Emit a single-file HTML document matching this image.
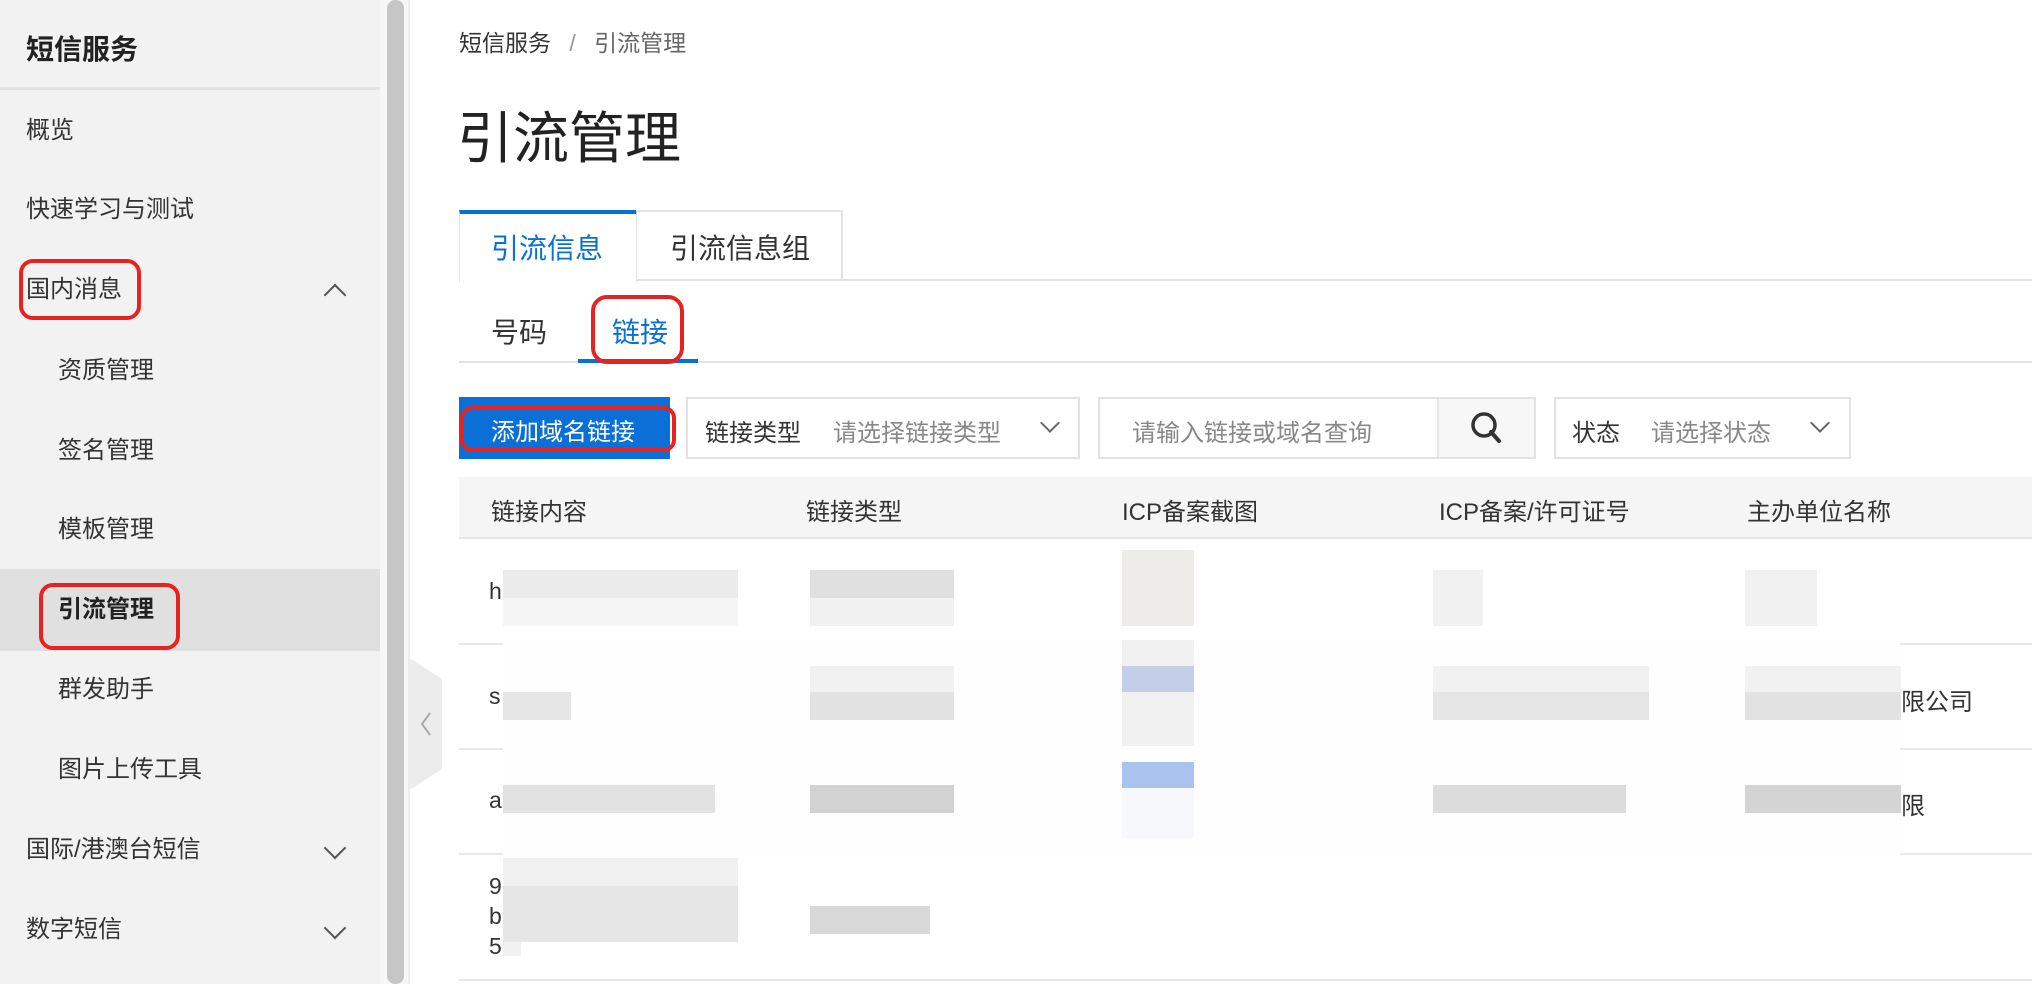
<!DOCTYPE html>
<html><head><meta charset="utf-8"><style>
*{margin:0;padding:0;box-sizing:border-box}
body{width:2032px;height:984px;overflow:hidden;background:#fff;font-family:"Liberation Sans","Noto Sans CJK SC",sans-serif;color:#333;position:relative}
.a{position:absolute;white-space:nowrap}
.side{position:absolute;left:0;top:0;width:380px;height:984px;background:#f2f2f2}
.it{position:absolute;font-size:24px;color:#333;line-height:30px}
.red{position:absolute;border:4px solid #e8231f;border-radius:14px}
.chev{position:absolute;width:16px;height:16px;border-left:2.5px solid #555;border-top:2.5px solid #555}
.g{position:absolute;background:#e4e4e4}
.l{position:absolute;background:#f1f1f1}
.th{position:absolute;top:492px;font-size:24px;color:#333}
.cell{position:absolute;font-size:23px;color:#333}
</style></head><body>
<div class="side"></div>
<div class="a" style="left:26px;top:28px;font-size:28px;font-weight:bold;color:#222">短信服务</div>
<div class="a" style="left:0;top:87px;width:380px;height:3px;background:#e2e2e2"></div>
<div class="it" style="left:26px;top:116px">概览</div>
<div class="it" style="left:26px;top:195px">快速学习与测试</div>
<div class="it" style="left:26px;top:275px">国内消息</div>
<div class="chev" style="left:327px;top:287px;transform:rotate(45deg)"></div>
<div class="it" style="left:58px;top:356px">资质管理</div>
<div class="it" style="left:58px;top:436px">签名管理</div>
<div class="it" style="left:58px;top:515px">模板管理</div>
<div class="a" style="left:0;top:569px;width:380px;height:82px;background:#e0e0e0"></div>
<div class="it" style="left:58px;top:595px;font-weight:bold;color:#222">引流管理</div>
<div class="it" style="left:58px;top:675px">群发助手</div>
<div class="it" style="left:58px;top:755px">图片上传工具</div>
<div class="it" style="left:26px;top:835px">国际/港澳台短信</div>
<div class="chev" style="left:327px;top:840px;transform:rotate(225deg)"></div>
<div class="it" style="left:26px;top:915px">数字短信</div>
<div class="chev" style="left:327px;top:920px;transform:rotate(225deg)"></div>
<div class="red" style="left:19px;top:259px;width:122px;height:61px"></div>
<div class="red" style="left:39px;top:583px;width:141px;height:67px"></div>
<!-- scrollbar -->
<div class="a" style="left:380px;top:0;width:28px;height:984px;background:#f7f7f7"></div>
<div class="a" style="left:387px;top:0;width:17px;height:984px;background:#c6c6c6;border-radius:8px"></div>
<div class="a" style="left:408px;top:0;width:2px;height:984px;background:#ededed"></div>
<!-- collapse handle -->
<svg class="a" style="left:408px;top:657px" width="36" height="134"><path d="M0 0 L34 22 L34 112 L0 134Z" fill="#ececec"/><path d="M22 56 L14 67 L22 78" stroke="#aaa" stroke-width="2" fill="none"/></svg>
<!-- main -->
<div class="a" style="left:459px;top:24px;font-size:23px;color:#333">短信服务 <span style="color:#999;margin:0 12px">/</span> <span style="color:#666">引流管理</span></div>
<div class="a" style="left:457px;top:94px;font-size:56px;color:#222">引流管理</div>
<!-- tabs -->
<div class="a" style="left:459px;top:210px;width:178px;height:72px;background:#fff;border-top:4px solid #0a6fd6;border-left:1px solid #e4e4e4;border-right:1px solid #e4e4e4"></div>
<div class="a" style="left:491px;top:227px;font-size:28px;color:#0a6fd6">引流信息</div>
<div class="a" style="left:636px;top:210px;width:207px;height:71px;border:2px solid #e2e2e2;border-left:none"></div>
<div class="a" style="left:670px;top:227px;font-size:28px;color:#333">引流信息组</div>
<div class="a" style="left:843px;top:279px;width:1189px;height:2px;background:#e2e2e2"></div>
<!-- subtabs -->
<div class="a" style="left:491px;top:311px;font-size:28px;color:#333">号码</div>
<div class="a" style="left:612px;top:311px;font-size:28px;color:#0a6fd6">链接</div>
<div class="a" style="left:459px;top:361px;width:1573px;height:2px;background:#e2e2e2"></div>
<div class="a" style="left:578px;top:359px;width:120px;height:4px;background:#0a6fd6"></div>
<div class="red" style="left:591px;top:295px;width:93px;height:69px;border-radius:16px"></div>
<!-- toolbar -->
<div class="a" style="left:459px;top:397px;width:211px;height:62px;background:#0a6fd6"></div>
<div class="a" style="left:491px;top:412px;font-size:24px;color:#fff">添加域名链接</div>
<div class="red" style="left:460px;top:406px;width:216px;height:46px;border-radius:12px"></div>
<div class="a" style="left:686px;top:397px;width:394px;height:62px;border:2px solid #e2e2e2"></div>
<div class="a" style="left:705px;top:413px;font-size:24px;color:#333">链接类型</div>
<div class="a" style="left:833px;top:413px;font-size:24px;color:#888">请选择链接类型</div>
<div class="chev" style="left:1043px;top:416px;width:14px;height:14px;transform:rotate(225deg);border-color:#666;border-width:2px"></div>
<div class="a" style="left:1098px;top:397px;width:438px;height:62px;border:2px solid #e2e2e2"></div>
<div class="a" style="left:1437px;top:399px;width:97px;height:58px;background:#f7f7f7;border-left:2px solid #e6e6e6"></div>
<div class="a" style="left:1132px;top:413px;font-size:24px;color:#888">请输入链接或域名查询</div>
<svg class="a" style="left:1470px;top:411px" width="34" height="34"><circle cx="14" cy="14" r="11" stroke="#333" stroke-width="3.5" fill="none"/><path d="M21 21 L29 30" stroke="#333" stroke-width="4" stroke-linecap="round"/></svg>
<div class="a" style="left:1554px;top:397px;width:297px;height:62px;border:2px solid #e2e2e2"></div>
<div class="a" style="left:1572px;top:413px;font-size:24px;color:#333">状态</div>
<div class="a" style="left:1651px;top:413px;font-size:24px;color:#888">请选择状态</div>
<div class="chev" style="left:1813px;top:416px;width:14px;height:14px;transform:rotate(225deg);border-color:#666;border-width:2px"></div>
<!-- table -->
<div class="a" style="left:459px;top:477px;width:1573px;height:62px;background:#f5f5f5;border-bottom:2px solid #e6e6e6"></div>
<div class="th" style="left:491px">链接内容</div>
<div class="th" style="left:806px">链接类型</div>
<div class="th" style="left:1122px">ICP备案截图</div>
<div class="th" style="left:1439px">ICP备案/许可证号</div>
<div class="th" style="left:1747px">主办单位名称</div>
<div class="a" style="left:459px;top:643px;width:1573px;height:2px;background:#e8e8e8"></div>
<div class="a" style="left:459px;top:748px;width:1573px;height:2px;background:#e8e8e8"></div>
<div class="a" style="left:459px;top:853px;width:1573px;height:2px;background:#e8e8e8"></div>
<div class="a" style="left:459px;top:979px;width:1573px;height:2px;background:#e8e8e8"></div>
<div class="a" style="left:503px;top:643px;width:1397px;height:212px;background:#fefefe"></div>
<div class="cell" style="left:489px;top:578px">h</div>
<div class="cell" style="left:489px;top:683px">s</div>
<div class="cell" style="left:489px;top:787px">a</div>
<div class="cell" style="left:489px;top:871px;line-height:30px">9<br>b<br>5.</div>
<div class="cell" style="left:1901px;top:682px;font-size:24px">限公司</div>
<div class="cell" style="left:1901px;top:786px;font-size:24px">限</div>
<!-- blurred blocks -->
<div class="g" style="left:503px;top:570px;width:235px;height:28px;background:#ebebeb"></div>
<div class="l" style="left:503px;top:598px;width:235px;height:28px;background:#f5f5f5"></div>
<div class="g" style="left:810px;top:570px;width:144px;height:28px;background:#e0e0e0"></div>
<div class="l" style="left:810px;top:598px;width:144px;height:28px"></div>
<div class="l" style="left:1122px;top:550px;width:72px;height:76px;background:#eeece8"></div>
<div class="l" style="left:1433px;top:570px;width:50px;height:56px"></div>
<div class="l" style="left:1745px;top:570px;width:72px;height:56px"></div>
<div class="g" style="left:503px;top:692px;width:68px;height:28px;background:#e6e6e6"></div>
<div class="l" style="left:810px;top:666px;width:144px;height:28px"></div>
<div class="g" style="left:810px;top:692px;width:144px;height:28px;background:#e2e2e2"></div>
<div class="l" style="left:1122px;top:640px;width:72px;height:26px"></div>
<div class="a" style="left:1122px;top:666px;width:72px;height:26px;background:#c3cfe9"></div>
<div class="l" style="left:1122px;top:692px;width:72px;height:54px"></div>
<div class="l" style="left:1433px;top:666px;width:216px;height:28px"></div>
<div class="g" style="left:1433px;top:692px;width:216px;height:28px;background:#e6e6e6"></div>
<div class="l" style="left:1745px;top:666px;width:156px;height:28px"></div>
<div class="g" style="left:1745px;top:692px;width:156px;height:28px;background:#e2e2e2"></div>
<div class="g" style="left:503px;top:785px;width:212px;height:28px;background:#e2e2e2"></div>
<div class="g" style="left:810px;top:785px;width:144px;height:28px;background:#d2d2d2"></div>
<div class="a" style="left:1122px;top:762px;width:72px;height:26px;background:#a9c2ee"></div>
<div class="l" style="left:1122px;top:788px;width:72px;height:50px;background:#f6f8fc"></div>
<div class="g" style="left:1433px;top:785px;width:193px;height:28px;background:#dcdcdc"></div>
<div class="g" style="left:1745px;top:785px;width:156px;height:28px;background:#d4d4d4"></div>
<div class="l" style="left:503px;top:858px;width:235px;height:28px"></div>
<div class="g" style="left:503px;top:886px;width:235px;height:56px;background:#e6e6e6"></div>
<div class="l" style="left:503px;top:942px;width:18px;height:14px"></div>
<div class="g" style="left:810px;top:906px;width:120px;height:28px;background:#d8d8d8"></div>
</body></html>
